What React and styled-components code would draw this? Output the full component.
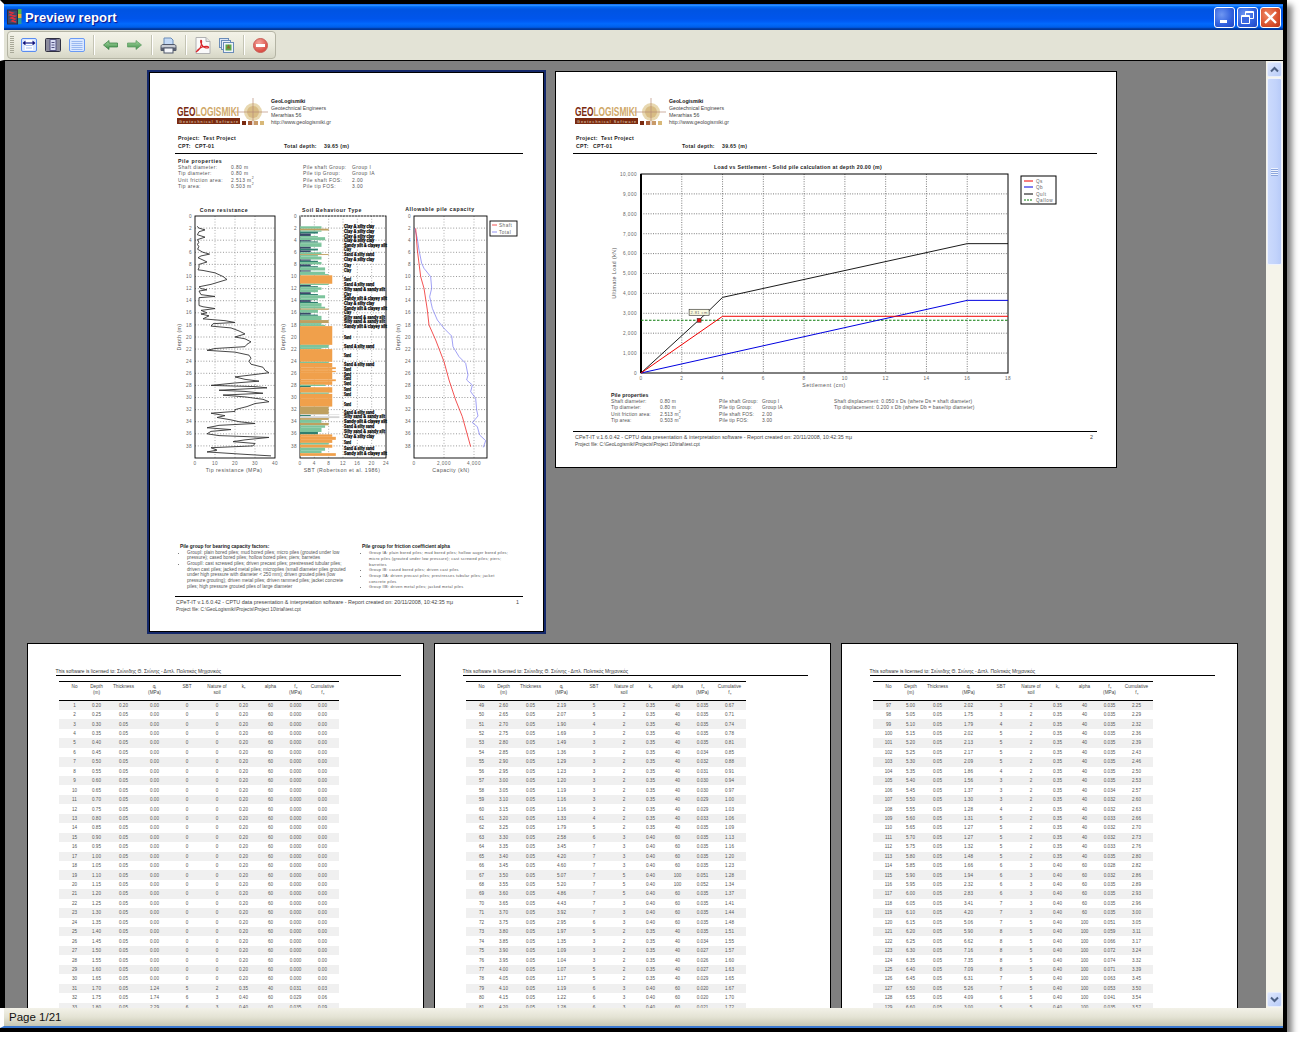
import React from "react";
import styled, { createGlobalStyle } from "styled-components";

const GlobalStyle = createGlobalStyle`
  html, body { margin: 0; padding: 0; background: #fff; }
  body { font-family: "Liberation Sans", Arial, sans-serif; }
`;

const Frame = styled.div`
  width: 1283px;
  height: 1028px;
  padding: 0 4px 4px 0;
  background: #000;
  box-shadow: 5px 5px 6px rgba(0, 0, 0, 0.5);
  display: flex;
  flex-direction: column;
`;

const TitleBar = styled.div`
  height: 26px;
  border-top: 4px solid #000;
  border-left: 4px solid #fff;
  display: flex;
  align-items: center;
  padding: 0 2px 0 3px;
  background: linear-gradient(180deg, #0058ee 0%, #3593ff 4%, #288eff 6%, #127dff 8%, #036ffc 10%, #0262ee 14%, #0057e5 20%, #0054e3 24%, #0055eb 56%, #005bf5 66%, #026afe 76%, #0062ef 86%, #0052d6 92%, #0040ab 94%, #003092 100%);
  background-origin: padding-box;
`;

const TitleText = styled.div`
  margin-left: 3px;
  flex: 1;
  color: #fff;
  font-size: 13px;
  font-weight: 700;
  letter-spacing: 0.1px;
  text-shadow: 1px 1px 1px #0f1089;
`;

const WindowButton = styled.div`
  width: 19px;
  height: 19px;
  margin-left: 2px;
  border: 1px solid #fff;
  border-radius: 3px;
  display: flex;
  align-items: center;
  justify-content: center;
  background: ${(p) =>
    p.$close
      ? "radial-gradient(circle at 35% 35%, #ef8a66, #d9502c 60%, #b9351a)"
      : "radial-gradient(circle at 35% 35%, #6f97f2, #2f5fdd 60%, #2346c0)"};
`;

const Toolbar = styled.div`
  height: 30px;
  border-left: 4px solid #fff;
  border-bottom: 1px solid #000;
  background: #e3e3d6;
  display: flex;
  align-items: center;
  padding-left: 3px;
`;

const ToolGroup = styled.div`
  height: 28px;
  width: 269px;
  box-sizing: border-box;
  border: 1px solid #b4b4a4;
  border-radius: 4px;
  background: linear-gradient(180deg, #f3f2e8 0%, #e8e8da 55%, #d6d6c6 100%);
  display: flex;
  align-items: center;
  padding-left: 2px;
`;

const Gripper = styled.div`
  width: 4px;
  height: 18px;
  margin-right: 2.5px;
  background: repeating-linear-gradient(180deg, #a8a898 0 1px, transparent 1px 2px);
`;

const ToolButton = styled.div`
  width: 24px;
  height: 24px;
  display: flex;
  align-items: center;
  justify-content: center;
`;

const ToolSeparator = styled.div`
  width: 1px;
  height: 20px;
  margin: 0 4px 0 4px;
  background: #c4c4b4;
  border-right: 1px solid #fff;
`;

const Middle = styled.div`
  flex: 1;
  min-height: 0;
  margin-left: 5px;
  display: flex;
`;

const Canvas = styled.div`
  flex: 1;
  min-width: 0;
  overflow: hidden;
  background: #808080;
  padding: 9px 7px 0 0;
  box-sizing: border-box;
  display: flex;
  flex-direction: column;
  gap: 9px;
`;

const PageRow = styled.div`
  display: flex;
  justify-content: center;
  align-items: flex-start;
  gap: ${(p) => p.$gap}px;
  flex-shrink: 0;
`;

const Sheet = styled.div`
  flex-shrink: 0;
  box-sizing: border-box;
  background: #fff;
  color: #333;
  border: 1px solid #000;
  display: flex;
  flex-direction: column;
  overflow: hidden;
`;

const CoverSheet = styled(Sheet)`
  width: 399px;
  height: 564px;
  padding: 22px 21px 0 26px;
  border: 2px solid #14286a;
  box-shadow: inset 0 0 0 1px #000;
`;

const ChartSheet = styled(Sheet)`
  width: 562px;
  height: 397px;
  margin-top: 1px;
  padding: 22px 19px 0 17px;
`;

const TableSheet = styled(Sheet)`
  width: 397px;
  height: 564px;
  padding: 24px 22px 0 28px;
`;

const Letterhead = styled.div`
  display: flex;
  padding-left: 2px;
`;

const Contact = styled.div`
  margin: 3.5px 0 0 2px;
  font-size: 5.2px;
  line-height: 7.3px;
  color: #444;
`;

const ContactName = styled.div`
  font-weight: 700;
  color: #111;
`;

const ProjectBlock = styled.div`
  margin-top: 7.3px;
  padding-left: 3px;
  font-size: 5.2px;
  line-height: 8px;
  font-weight: 700;
  color: #222;
  letter-spacing: 0.3px;
`;

const ProjectLine = styled.div`
  display: flex;
`;

const ProjectField = styled.span`
  width: ${(p) => p.$w}px;
  flex-shrink: 0;
`;

const Rule = styled.div`
  height: 1px;
  margin-top: ${(p) => p.$top || 0}px;
  background: #000;
  flex-shrink: 0;
`;

const PropsTitle = styled.div`
  margin-top: ${(p) => p.$top}px;
  padding-left: ${(p) => p.$left}px;
  font-size: 5.2px;
  line-height: 8px;
  font-weight: 700;
  letter-spacing: ${(p) => p.$spacing}px;
  color: #222;
`;

const PropsGrid = styled.div`
  display: grid;
  grid-template-columns: ${(p) => p.$cols};
  padding-left: ${(p) => p.$left}px;
  font-size: 4.9px;
  line-height: 6.4px;
  letter-spacing: ${(p) => p.$spacing}px;
  color: #555;
  white-space: nowrap;
`;

const ChartRow = styled.div`
  display: flex;
  margin-top: ${(p) => p.$top}px;
  flex-shrink: 0;
`;

const ChartSvg = styled.svg`
  display: block;
  flex-shrink: 0;
`;

const AxisText = styled.text`
  font-size: ${(p) => p.$size || 4.7}px;
  fill: #666;
  letter-spacing: 0.45px;
`;

const AxisTitle = styled.text`
  font-size: 5.2px;
  fill: #555;
  letter-spacing: 0.45px;
`;

const ChartTitle = styled.text`
  font-size: 5.2px;
  font-weight: 700;
  fill: #222;
  letter-spacing: ${(p) => p.$spacing}px;
`;

const SbtText = styled.text`
  font-size: 4.6px;
  font-weight: 700;
  fill: #000;
  stroke: #000;
  stroke-width: 0.25px;
`;

const NotesRow = styled.div`
  margin-top: 67px;
  padding-left: 5px;
  display: grid;
  grid-template-columns: 182px 154px;
  height: 53px;
`;

const NoteTitle = styled.div`
  font-size: 4.8px;
  line-height: 8px;
  font-weight: 700;
  color: #222;
`;

const NoteList = styled.ul`
  margin: ${(p) => (p.$small ? "-0.5px" : "-1px")} 0 0;
  padding: 0 0 0 7px;
  width: ${(p) => (p.$small ? "140px" : "165px")};
  font-size: ${(p) => (p.$small ? "3.9px" : "4.7px")};
  line-height: 5.7px;
  letter-spacing: ${(p) => (p.$small ? "0.25px" : "0")};
  color: #555;
`;

const Footer = styled.div`
  padding: 1px 4px 0 ${(p) => p.$left}px;
  line-height: 8px;
  color: #444;
`;

const FooterLine = styled.div`
  display: flex;
  justify-content: space-between;
  white-space: nowrap;
  font-size: ${(p) => p.$size}px;
`;

const LicenseText = styled.div`
  font-size: 4.9px;
  line-height: 7px;
  color: #333;
  white-space: nowrap;
`;

const Table = styled.div`
  margin: 5px 0 0 3px;
  width: 280px;
  border-top: 1px solid #000;
`;

const columns = "22px 22px 32px 30px 35px 25px 28px 26px 24px 30px";

const HeaderRow = styled.div`
  display: grid;
  grid-template-columns: ${columns};
  padding: 1.5px 0 2px 5px;
  border-bottom: 1px solid #000;
  font-size: 4.7px;
  line-height: 6.7px;
  text-align: center;
  color: #444;
  height: 14px;
`;

const DataRow = styled.div`
  display: grid;
  grid-template-columns: ${columns};
  padding-left: 5px;
  height: 9.45px;
  align-items: center;
  font-size: 4.6px;
  text-align: center;
  color: #555;
  background: ${(p) => (p.$shaded ? "#f0f0f0" : "#fff")};
`;

const ScrollBar = styled.div`
  width: 17px;
  flex-shrink: 0;
  background: #f5f4ea;
  display: flex;
  flex-direction: column;
  padding: 1px 0;
  box-sizing: border-box;
  overflow: hidden;
`;

const ScrollButton = styled.div`
  width: 15px;
  height: 15px;
  margin-left: 1px;
  border: 1px solid #e8eefc;
  border-radius: 2px;
  box-sizing: border-box;
  background: linear-gradient(135deg, #dfe8fd, #b8ccf8);
  display: flex;
  align-items: center;
  justify-content: center;
`;

const ScrollThumb = styled.div`
  width: 15px;
  height: 187px;
  margin: 1px 0 0 1px;
  border: 1px solid #eef2fd;
  border-radius: 2px;
  box-sizing: border-box;
  background: linear-gradient(90deg, #cbdafc, #c2d3fb 60%, #b8cbf8);
  display: flex;
  align-items: center;
  justify-content: center;
`;

const ThumbGrip = styled.div`
  width: 7px;
  height: 8px;
  background: repeating-linear-gradient(180deg, #eef3fe 0 1px, #8ca6dc 1px 2px);
`;

const ScrollTrack = styled.div`
  flex: 1;
`;

const StatusBar = styled.div`
  height: 18px;
  border-left: 4px solid #fff;
  border-bottom: 2px solid #3a78d0;
  background: linear-gradient(180deg, #f2f1e8 0%, #e4e3d4 50%, #c6c6b2 100%);
  padding-left: 5px;
  font-size: 11.5px;
  line-height: 19px;
  color: #111;
`;

/* ---- drawings ---- */

const AppIcon = () => (
  <svg width="15" height="16" viewBox="0 0 15 16">
    <rect x="0.5" y="1" width="10" height="14" fill="#3c4a6a" stroke="#2a2a40" />
    <path d="M2 3l4 1-3 2 5 1-4 2 4 1-3 2 4 1" fill="none" stroke="#e0303c" strokeWidth="1.4" />
    <rect x="11" y="0" width="3.5" height="5" fill="#58b848" />
    <rect x="11" y="5" width="3.5" height="4" fill="#e8b030" />
    <rect x="11" y="9" width="3.5" height="6" fill="#2a9a9a" />
  </svg>
);

const FitWidthIcon = () => (
  <svg width="16" height="14" viewBox="0 0 16 14">
    <rect x="0.5" y="0.5" width="15" height="13" rx="1.5" fill="#dbe8ff" stroke="#5a8cf0" />
    <rect x="4" y="2" width="8" height="10" fill="#fff" />
    <path d="M5 5h6M5 7.5h6M5 10h6" stroke="#a8c0f0" />
    <path d="M1.5 5l3-2.5v5zM14.5 5l-3-2.5v5z" fill="#10107a" />
    <path d="M3 5h10" stroke="#10107a" />
  </svg>
);

const OnePageIcon = () => (
  <svg width="16" height="14" viewBox="0 0 16 14">
    <rect x="0.5" y="0.5" width="15" height="13" rx="1" fill="#8c8c9c" stroke="#303040" />
    <rect x="5" y="1.5" width="6" height="11" fill="#d8dcf4" stroke="#505080" />
    <path d="M6.5 4.5h3M6.5 7h3M6.5 9.5h3" stroke="#505080" />
  </svg>
);

const PageWidthIcon = () => (
  <svg width="16" height="14" viewBox="0 0 16 14">
    <rect x="0.5" y="0.5" width="15" height="13" rx="1.5" fill="#dbe8ff" stroke="#6a9af4" />
    <path d="M2.5 3.5h11M2.5 5.5h11M2.5 7.5h11M2.5 9.5h11M2.5 11.5h11" stroke="#9ab8f0" />
  </svg>
);

const ArrowIcon = ({ right }) => (
  <svg width="15" height="10" viewBox="0 0 15 10">
    <defs>
      <linearGradient id={right ? "arrowR" : "arrowL"} x1="0" y1="0" x2="0" y2="1">
        <stop offset="0" stopColor="#a6d8a0" />
        <stop offset="1" stopColor="#3f8f4a" />
      </linearGradient>
    </defs>
    <path
      d={right ? "M0.5 3h8.5V0.5L14.5 5 9 9.5V7H0.5z" : "M14.5 3H6V0.5L0.5 5 6 9.5V7h8.5z"}
      fill={`url(#${right ? "arrowR" : "arrowL"})`}
      stroke={right ? "#5a9a60" : "#2f7a3c"}
      strokeWidth="0.7"
    />
  </svg>
);

const PrinterIcon = () => (
  <svg width="17" height="17" viewBox="0 0 17 17">
    <path d="M4 1h7l2 2v6H4z" fill="#c4daf6" stroke="#6a8cb8" />
    <path d="M1 9.5c0-1.5 1-2 2-2h11c1 0 2 .5 2 2v4H1z" fill="#c8ccd4" stroke="#50586a" />
    <rect x="1" y="10.5" width="15" height="3" fill="#5a6070" />
    <rect x="4" y="11" width="9" height="5" fill="#f4f6fa" stroke="#50586a" />
  </svg>
);

const PdfIcon = () => (
  <svg width="16" height="17" viewBox="0 0 16 17">
    <path d="M1 .5h10l4 4v12H1z" fill="#fafafa" stroke="#b0b0b0" />
    <path d="M11 .5v4h4" fill="#e4e4e4" stroke="#b0b0b0" />
    <path
      d="M1 15c3-1.5 5-5 5.5-8.5C7 3 6 2.5 5.6 4c-.3 2 2 5.5 4 6.5 1.5.6 4.4.8 4-.4-.3-1-4-.9-6.6-.1C5 11 2.5 13 1 15z"
      fill="none"
      stroke="#d8252a"
      strokeWidth="1.1"
    />
  </svg>
);

const ImagesIcon = () => (
  <svg width="15" height="15" viewBox="0 0 15 15">
    <rect x="0.5" y="0.5" width="9" height="9" fill="#dce6f6" stroke="#6a8cb8" />
    <rect x="2.5" y="2.5" width="9" height="9" fill="#e8eef8" stroke="#6a8cb8" />
    <rect x="4.5" y="4.5" width="10" height="10" fill="#f0f4fa" stroke="#6a8cb8" />
    <rect x="6.5" y="6.5" width="6" height="6" fill="#5aa84a" />
    <path d="M9.5 6.5l2 4h-4z" fill="#8a6a30" />
  </svg>
);

const StopIcon = () => (
  <svg width="15" height="15" viewBox="0 0 15 15">
    <defs>
      <radialGradient id="stopFill" cx="0.4" cy="0.3" r="0.8">
        <stop offset="0" stopColor="#f4a49c" />
        <stop offset="1" stopColor="#d4382e" />
      </radialGradient>
    </defs>
    <circle cx="7.5" cy="7.5" r="7" fill="url(#stopFill)" stroke="#c8605a" />
    <rect x="3" y="6" width="9" height="3" fill="#fff" />
  </svg>
);

const Logo = () => (
  <svg width="92" height="32" viewBox="0 0 92 32">
    <circle cx="76" cy="18" r="9" fill="#e8d8b0" />
    <circle cx="76" cy="18" r="6" fill="#d8bc84" />
    <path d="M58 18h33M76 4v27" stroke="#b88c78" strokeWidth="0.7" />
    <text x="0" y="21.5" fontSize="12" fontWeight="700" textLength="62" lengthAdjust="spacingAndGlyphs">
      <tspan fill="#7a2a10">GEO</tspan>
      <tspan fill="#cfa868">LOGISMIKI</tspan>
    </text>
    <rect x="0" y="24" width="63" height="6" fill="#7a2a10" />
    <text x="2" y="28.8" fontSize="3.6" fill="#f0e4d0" textLength="59" lengthAdjust="spacing">
      Geotechnical Software
    </text>
    <rect x="65" y="27" width="4" height="4" fill="#7a2a10" />
    <rect x="71" y="27" width="4" height="4" fill="#a8603c" />
    <rect x="77" y="27" width="4" height="4" fill="#c89a68" />
    <rect x="83" y="27" width="4" height="4" fill="#d8b878" />
  </svg>
);

const ReportHeader = () => (
  <>
    <Letterhead>
      <Logo />
      <Contact>
        <ContactName>GeoLogismiki</ContactName>
        <div>Geotechnical Engineers</div>
        <div>Merarhias 56</div>
        <div>http://www.geologismiki.gr</div>
      </Contact>
    </Letterhead>
    <ProjectBlock>
      <ProjectLine>
        <ProjectField $w={25}>Project:</ProjectField>
        <span>Test Project</span>
      </ProjectLine>
      <ProjectLine>
        <ProjectField $w={17}>CPT:</ProjectField>
        <ProjectField $w={89}>CPT-01</ProjectField>
        <ProjectField $w={40}>Total depth:</ProjectField>
        <span>39.65 (m)</span>
      </ProjectLine>
    </ProjectBlock>
    <Rule $top={3} />
  </>
);

const Superscript = styled.sup`
  font-size: 3.5px;
  line-height: 0;
`;

const ReportFooter = ({ page, left }) => (
  <Footer $left={left}>
    <FooterLine $size={5.4}>
      <span>CPeT-IT v.1.6.0.42 - CPTU data presentation &amp; interpretation software - Report created on: 20/11/2008, 10:42:35 πμ</span>
      <span>{page}</span>
    </FooterLine>
    <FooterLine $size={4.7}>
      <span>Project file: C:\GeoLogismiki\Projects\Project 10\trial\test.cpt</span>
    </FooterLine>
  </Footer>
);

const depthTicks = Array.from({ length: 20 }, (_, i) => i * 2);
const FT = 12;
const FB = 254;
const mToY = (d) => FT + (d * (FB - FT)) / 40;

const DepthAxes = ({ x0, x1, xTicks, title, xTitle, titleX, titleY = 8, depthX, xTitleX, dashedTop }) => (
  <>
    {depthTicks.slice(1).map((d) => (
      <line key={d} x1={x0} x2={x1} y1={mToY(d)} y2={mToY(d)} stroke="#555" strokeWidth="0.6" strokeDasharray="1 1.8" />
    ))}
    {xTicks.slice(1, -1).map((t) => (
      <line key={t.x} x1={t.x} x2={t.x} y1={FT} y2={FB} stroke="#777" strokeWidth="0.6" strokeDasharray="1 1.8" />
    ))}
    <rect x={x0} y={FT} width={x1 - x0} height={FB - FT} fill="none" stroke="#000" strokeWidth="0.9" />
    {dashedTop && <line x1={x0} x2={x1} y1={FT} y2={FT} stroke="#fff" strokeWidth="1" strokeDasharray="1 2" />}
    {depthTicks.map((d) => (
      <AxisText key={d} x={x0 - 3} y={mToY(d) + 1.6} textAnchor="end">
        {d}
      </AxisText>
    ))}
    {xTicks.map((t) => (
      <AxisText key={t.x} x={t.x} y={FB + 6.5} textAnchor="middle">
        {t.label}
      </AxisText>
    ))}
    <ChartTitle x={titleX} y={titleY} textAnchor="middle" $spacing={0.55}>
      {title}
    </ChartTitle>
    <AxisTitle x={xTitleX} y={FB + 13.5} textAnchor="middle">
      {xTitle}
    </AxisTitle>
    <AxisTitle transform={`translate(${depthX} 133) rotate(-90)`} textAnchor="middle">
      Depth (m)
    </AxisTitle>
  </>
);

const conePoints = [[1.7,1],[2,2],[2.3,5],[2.6,2],[3.1,1.2],[3.5,5],[3.9,1.2],[4.4,2],[4.7,1],[5,2],[5.5,1.3],[6,4],[6.3,7.3],[6.6,3],[6.9,1.5],[7.2,3.5],[7.6,6],[8,2],[8.5,2],[8.9,1.5],[9,4],[9.4,10],[10,14],[10.5,16],[10.8,13],[11.3,8],[11.7,2],[12,3],[12.2,6],[12.4,2],[13,3],[13.3,10],[13.5,2],[14.2,2],[14.8,2],[15,4],[15.3,10],[15.6,3],[16,6],[16.2,3],[16.5,7],[17,4],[17.3,15],[17.6,20],[17.8,9],[18.2,8],[18.5,18],[19,22],[19.5,25],[20,20],[20.3,25],[20.8,28],[21.2,26],[21.6,25],[21.9,10],[22.2,6],[22.5,20],[23,27],[23.5,28],[24,27],[24.5,28],[25,34],[25.5,35],[25.9,37],[26.2,30],[26.6,20],[27,25],[27.3,32],[27.6,20],[28,8],[28.2,30],[28.4,36],[28.8,12],[29,25],[29.3,34],[29.6,14],[29.9,25],[30.3,34],[30.7,37],[31,30],[31.5,26],[32,20],[32.3,20],[32.6,8],[33,15],[33.3,11],[33.7,18],[34,22],[34.3,30],[34.6,12],[35,6],[35.3,18],[35.6,8],[36,6],[36.3,12],[36.6,37],[37,25],[37.3,19],[37.6,30],[38,29],[38.3,8],[38.7,11],[39,6],[39.4,25],[39.65,38]];

const ConeChart = () => {
  const x0 = 20;
  const sx = (v) => x0 + v * 2;
  return (
    <ChartSvg width="104" height="272">
      <DepthAxes
        x0={x0}
        x1={100}
        xTicks={[0, 10, 20, 30, 40].map((v) => ({ x: sx(v), label: v }))}
        title="Cone resistance"
        titleX={49}
        xTitle="Tip resistance (MPa)"
        xTitleX={59}
        depthX={6}
      />
      <polyline
        points={conePoints.map(([d, v]) => `${sx(v)},${mToY(d)}`).join(" ")}
        fill="none"
        stroke="#333"
        strokeWidth="0.9"
      />
    </ChartSvg>
  );
};

const G = "#7cc49c";
const T = "#2f7f6f";
const N = "#3a4a6a";
const O = "#f0a04b";
const B = "#bfa060";
const L = "#d4d4d4";
const sbtBars = [[2.1,6,G],[2.4,8,B],[2.6,6,G],[2.9,5,T],[3.3,3,N],[3.5,5,G],[4,7,G],[4.2,3,N],[4.4,5,T],[4.6,6,G],[5.1,6,G],[5.4,3,N],[5.7,5,T],[6,3,N],[6.3,6,G],[6.45,8,B],[6.7,5,G],[7.2,6,G],[7.4,3,N],[7.6,5,T],[8,6,G],[8.3,3,N],[8.5,5,T],[9,7,G],[9.2,3,N],[9.6,7,G],[9.8,8,G],[11.2,9,O],[11.4,8,G],[11.6,3,N],[11.8,5,T],[12.2,6,G],[12.6,5,G],[12.9,3,N],[13.1,5,T],[13.6,7,G],[13.9,5,G],[14.2,3,N],[14.4,5,T],[15,6,G],[15.3,7,G],[15.5,8,B],[16,5,G],[16.3,3,N],[16.5,5,T],[17.2,6,G],[17.7,8,B],[18,6,G],[18.2,7,G],[21.3,9,O],[21.8,8,G],[22,6,G],[24.1,9,O],[24.3,8,G],[25,9,O],[25.3,10,O],[25.6,9,O],[25.8,10,O],[27,9,O],[27.3,10,O],[27.9,9,O],[28.1,7,G],[28.3,3,T],[29.2,9,O],[29.4,8,G],[30.1,9,O],[31.5,9,O],[32.8,8,B],[32.9,11,L],[33.1,3,T],[33.4,11,L],[33.7,8,B],[34.2,6,G],[34.6,8,B],[35,7,G],[35.7,6,G],[36.1,5,T],[36.5,9,O],[37,10,O],[37.5,9,O],[37.8,8,G],[38.3,9,O],[38.8,7,G],[39.2,6,G],[39.65,10,O]];

const CS = "Clay & silty clay";
const SS = "Sand & silty sand";
const SI = "Silty sand & sandy silt";
const SC = "Sandy silt & clayey silt";
const sbtLabels = [[1.65,CS],[2.6,CS],[3.3,CS],[4.05,CS],[4.8,SC],[5.6,"Clay"],[6.3,SS],[7.1,CS],[8.1,"Clay"],[9,"Clay"],[10.4,"Sand"],[11.3,SS],[12.1,SI],[12.9,"Clay"],[13.6,SC],[14.4,CS],[15.2,SC],[16,"Clay"],[16.8,SI],[17.5,SI],[18.3,SC],[20,"Sand"],[21.6,SS],[23.1,"Sand"],[24.5,SS],[25.3,"Sand"],[26.2,"Sand"],[26.9,"Sand"],[27.7,"Sand"],[28.7,"Sand"],[29.5,"Sand"],[31.2,"Sand"],[32.5,SS],[33.2,SI],[34,SC],[34.7,SS],[35.6,SI],[36.5,CS],[37.5,"Sand"],[38.4,SS],[39.2,SC]];

const SbtChart = () => {
  const x0 = 21;
  const unit = 86 / 24;
  let from = 1.7;
  const bars = sbtBars.map(([to, len, color]) => {
    const bar = <rect key={to} x={x0} y={mToY(from)} width={len * unit} height={mToY(to) - mToY(from)} fill={color} />;
    from = to;
    return bar;
  });
  return (
    <ChartSvg width="116" height="272">
      <DepthAxes
        x0={x0}
        x1={107}
        xTicks={[0, 4, 8, 12, 16, 20, 24].map((v) => ({ x: x0 + v * unit, label: v }))}
        title="Soil Behaviour Type"
        titleX={53}
        xTitle="SBT (Robertson et al. 1986)"
        xTitleX={63}
        depthX={6}
        dashedTop
      />
      {bars}
      {sbtLabels.map(([d, label]) => (
        <SbtText key={d} x={65} y={mToY(d) + 1.6} textLength={label.length * 1.78} lengthAdjust="spacingAndGlyphs">
          {label}
        </SbtText>
      ))}
    </ChartSvg>
  );
};

const shaftLine = [[800,85],[805,150],[815,230],[825,265],[835,330],[840,375],[860,420],[885,485],[900,540],[920,600],[940,650],[965,740]];
const totalLine = [[797,85],[805,115],[810,150],[818,190],[825,205],[845,230],[848,265],[842,290],[850,325],[865,360],[885,385],[908,408],[912,440],[930,470],[950,490],[957,525],[953,540],[970,555],[965,575],[980,595],[983,630],[987,648],[970,668],[985,680],[992,705],[1010,722],[1003,742]];

const CapacityChart = () => {
  const x0 = 19;
  const local = (line) => line.map(([x, y]) => `${x0 + (x - 795) / 3},${FT + (y - 48) / 3}`).join(" ");
  return (
    <ChartSvg width="126" height="272">
      <DepthAxes
        x0={x0}
        x1={92}
        xTicks={[
          { x: x0, label: "0" },
          { x: x0 + 30, label: "2,000" },
          { x: x0 + 60, label: "4,000" },
          { x: x0 + 73, label: "" },
        ]}
        title="Allowable pile capacity"
        titleX={45}
        titleY={7}
        xTitle="Capacity (kN)"
        xTitleX={56}
        depthX={5}
      />
      <polyline points={local(totalLine)} fill="none" stroke="#7878f0" strokeWidth="0.7" />
      <polyline points={local(shaftLine)} fill="none" stroke="#f02828" strokeWidth="0.8" />
      <rect x="95" y="17" width="27" height="15" fill="#fff" stroke="#000" strokeWidth="0.9" />
      <line x1="97" x2="102" y1="21" y2="21" stroke="#f02828" strokeWidth="0.8" />
      <line x1="97" x2="102" y1="28" y2="28" stroke="#7878f0" strokeWidth="0.8" />
      <AxisText x="104" y="22.5">Shaft</AxisText>
      <AxisText x="104" y="29.5">Total</AxisText>
    </ChartSvg>
  );
};

const LoadChart = () => {
  const x0 = 68;
  const x1 = 435;
  const yT = 13;
  const yB = 212;
  const sx = (v) => x0 + (v * (x1 - x0)) / 18;
  const sy = (v) => yB - (v * (yB - yT)) / 10000;
  const path = (pts) => pts.map(([a, b]) => `${sx(a)},${sy(b)}`).join(" ");
  const loads = Array.from({ length: 11 }, (_, i) => i * 1000);
  const settle = Array.from({ length: 10 }, (_, i) => i * 2);
  return (
    <ChartSvg width="524" height="230">
      <ChartTitle x="225" y="8" textAnchor="middle" $spacing={0.3}>
        Load vs Settlement - Solid pile calculation at depth 20.00 (m)
      </ChartTitle>
      {loads.slice(1, -1).map((v) => (
        <line key={v} x1={x0} x2={x1} y1={sy(v)} y2={sy(v)} stroke="#444" strokeWidth="0.7" strokeDasharray="1 1.4" />
      ))}
      {settle.slice(1, -1).map((v) => (
        <line key={v} x1={sx(v)} x2={sx(v)} y1={yT} y2={yB} stroke="#444" strokeWidth="0.7" strokeDasharray="1 1.4" />
      ))}
      <rect x={x0} y={yT} width={x1 - x0} height={yB - yT} fill="none" stroke="#000" strokeWidth="1" />
      <line x1={x0} x2={x0} y1={yT} y2={yB} stroke="#000" strokeWidth="2" />
      {loads.map((v) => (
        <AxisText key={v} x={x0 - 4} y={sy(v) + 1.8} textAnchor="end">
          {v.toLocaleString("en-US")}
        </AxisText>
      ))}
      {settle.map((v) => (
        <AxisText key={v} x={sx(v)} y={yB + 7} textAnchor="middle">
          {v}
        </AxisText>
      ))}
      <AxisTitle x="251" y={yB + 13.5} textAnchor="middle">Settlement (cm)</AxisTitle>
      <AxisTitle transform="translate(43 112) rotate(-90)" textAnchor="middle">Ultimate Load (kN)</AxisTitle>
      <line x1={x0} x2={x1} y1={sy(2650)} y2={sy(2650)} stroke="#0a7a0a" strokeWidth="1" strokeDasharray="2.5 1.5" />
      <polyline points={path([[0, 0], [3.2, 3000], [4, 3800], [16, 6500], [18, 6500]])} fill="none" stroke="#000" strokeWidth="0.9" />
      <polyline points={path([[0, 0], [16, 3650], [18, 3650]])} fill="none" stroke="#0000e0" strokeWidth="1" />
      <polyline points={path([[0, 0], [4, 2850], [18, 2850]])} fill="none" stroke="#f00000" strokeWidth="1" />
      <rect x={sx(2.85) - 2} y={sy(2650) - 2} width="4" height="4" fill="#e81010" stroke="#333" strokeWidth="0.5" />
      <rect x={sx(2.85) - 10} y={sy(2650) - 11} width="20" height="6" fill="#fbfbe0" stroke="#222" strokeWidth="0.6" />
      <AxisText x={sx(2.85)} y={sy(2650) - 6.5} textAnchor="middle" $size={4}>2.81 cm</AxisText>
      <rect x="448" y="15" width="35" height="28" fill="#fff" stroke="#000" strokeWidth="1" />
      {[
        ["Qs", "#f00000", 20, undefined],
        ["Qb", "#0000e0", 26, undefined],
        ["Qult", "#000", 33, undefined],
        ["Qallow", "#0a7a0a", 39, "2 1"],
      ].map(([label, color, y, dash]) => (
        <React.Fragment key={label}>
          <line x1="451" x2="460" y1={y} y2={y} stroke={color} strokeWidth="1" strokeDasharray={dash} />
          <AxisText x="463" y={y + 1.6}>{label}</AxisText>
        </React.Fragment>
      ))}
    </ChartSvg>
  );
};

/* ---- table data: q sbt nature ks alpha fs cumulative ---- */

const zeroRows = Array.from({ length: 30 }, () => "0.00 0 0 0.20 60 0.000 0.00");
const tableOne = [...zeroRows, "1.24 5 2 0.35 40 0.031 0.03", "1.74 6 3 0.40 60 0.029 0.06", "2.29 6 3 0.40 60 0.035 0.09"];
const tableTwo = `2.19 5 2 0.35 40 0.035 0.67
2.07 5 2 0.35 40 0.035 0.71
1.90 4 2 0.35 40 0.035 0.74
1.69 3 2 0.35 40 0.035 0.78
1.49 3 2 0.35 40 0.035 0.81
1.36 3 2 0.35 40 0.034 0.85
1.29 3 2 0.35 40 0.032 0.88
1.23 3 2 0.35 40 0.031 0.91
1.20 3 2 0.35 40 0.030 0.94
1.19 3 2 0.35 40 0.030 0.97
1.16 3 2 0.35 40 0.029 1.00
1.16 3 2 0.35 40 0.029 1.03
1.33 4 2 0.35 40 0.033 1.06
1.79 5 2 0.35 40 0.035 1.09
2.58 6 3 0.40 60 0.035 1.13
3.45 7 3 0.40 60 0.035 1.16
4.20 7 3 0.40 60 0.035 1.20
4.60 7 3 0.40 60 0.035 1.23
5.07 7 5 0.40 100 0.051 1.28
5.20 7 5 0.40 100 0.052 1.34
4.86 7 5 0.40 60 0.035 1.37
4.43 7 3 0.40 60 0.035 1.41
3.92 7 3 0.40 60 0.035 1.44
2.95 6 3 0.40 60 0.035 1.48
1.97 5 2 0.35 40 0.035 1.51
1.35 3 2 0.35 40 0.034 1.55
1.09 3 2 0.35 40 0.027 1.57
1.04 3 2 0.35 40 0.026 1.60
1.07 5 2 0.35 40 0.027 1.63
1.17 5 2 0.35 40 0.029 1.65
1.19 6 3 0.40 60 0.020 1.67
1.22 6 3 0.40 60 0.020 1.70
1.28 6 3 0.40 60 0.021 1.72`.split("\n");
const tableThree = `2.02 3 2 0.35 40 0.035 2.25
1.75 3 2 0.35 40 0.035 2.29
1.79 4 2 0.35 40 0.035 2.32
2.02 5 2 0.35 40 0.035 2.36
2.13 5 2 0.35 40 0.035 2.39
2.17 5 2 0.35 40 0.035 2.43
2.09 5 2 0.35 40 0.035 2.46
1.86 4 2 0.35 40 0.035 2.50
1.56 3 2 0.35 40 0.035 2.53
1.37 3 2 0.35 40 0.034 2.57
1.30 3 2 0.35 40 0.032 2.60
1.28 4 2 0.35 40 0.032 2.63
1.31 5 2 0.35 40 0.033 2.66
1.27 5 2 0.35 40 0.032 2.70
1.27 5 2 0.35 40 0.032 2.73
1.32 5 2 0.35 40 0.033 2.76
1.48 5 2 0.35 40 0.035 2.80
1.66 6 3 0.40 60 0.028 2.82
1.94 6 3 0.40 60 0.032 2.86
2.32 6 3 0.40 60 0.035 2.89
2.83 6 3 0.40 60 0.035 2.93
3.41 7 3 0.40 60 0.035 2.96
4.20 7 3 0.40 60 0.035 3.00
5.06 7 5 0.40 100 0.051 3.05
5.90 8 5 0.40 100 0.059 3.11
6.62 8 5 0.40 100 0.066 3.17
7.16 8 5 0.40 100 0.072 3.24
7.35 8 5 0.40 100 0.074 3.32
7.09 8 5 0.40 100 0.071 3.39
6.31 7 5 0.40 100 0.063 3.45
5.26 7 5 0.40 100 0.053 3.50
4.09 6 5 0.40 100 0.041 3.54
3.00 5 5 0.40 100 0.035 3.57`.split("\n");

const headers = [
  ["No"],
  ["Depth", "(m)"],
  ["Thickness"],
  ["qₜ", "(MPa)"],
  ["SBT"],
  ["Nature of", "soil"],
  ["kₛ"],
  ["alpha"],
  ["fₛ", "(MPa)"],
  ["Cumulative", "fₛ"],
];

const TablePage = ({ start, rows }) => (
  <TableSheet>
    <LicenseText>This software is licensed to: Σιώνιδης Θ. Σιώνης - Διπλ. Πολιτικός Μηχανικός</LicenseText>
    <Rule />
    <Table>
      <HeaderRow>
        {headers.map((lines) => (
          <div key={lines[0]}>
            {lines.map((line) => (
              <div key={line}>{line}</div>
            ))}
          </div>
        ))}
      </HeaderRow>
      {rows.map((row, i) => {
        const no = start + i;
        const [q, ...rest] = row.split(" ");
        return (
          <DataRow key={no} $shaded={i % 2 === 0}>
            <span>{no}</span>
            <span>{(0.15 + no * 0.05).toFixed(2)}</span>
            <span>{no === 1 ? "0.20" : "0.05"}</span>
            <span>{q}</span>
            {rest.map((cell, c) => (
              <span key={c}>{cell}</span>
            ))}
          </DataRow>
        );
      })}
    </Table>
  </TableSheet>
);

const Chevron = ({ down }) => (
  <svg width="9" height="7" viewBox="0 0 9 7">
    <path d={down ? "M1 1.5l3.5 3.5L8 1.5" : "M1 5.5L4.5 2 8 5.5"} fill="none" stroke="#4d6185" strokeWidth="2" />
  </svg>
);

export default function App() {
  return (
    <>
      <GlobalStyle />
      <Frame>
        <TitleBar>
          <AppIcon />
          <TitleText>Preview report</TitleText>
          <WindowButton>
            <svg width="15" height="15" viewBox="0 0 15 15">
              <rect x="3" y="10" width="7" height="3" fill="#fff" />
            </svg>
          </WindowButton>
          <WindowButton>
            <svg width="15" height="15" viewBox="0 0 15 15">
              <path d="M5.5 1.5h8v7h-8zM5.5 2.5h8" fill="none" stroke="#fff" />
              <path d="M1.5 5.5h8v8h-8zM1.5 6.5h8" fill="#3c68e0" stroke="#fff" />
            </svg>
          </WindowButton>
          <WindowButton $close>
            <svg width="15" height="15" viewBox="0 0 15 15">
              <path d="M2 2l11 11M13 2L2 13" stroke="#fff" strokeWidth="2.4" />
            </svg>
          </WindowButton>
        </TitleBar>
        <Toolbar>
          <ToolGroup>
            <Gripper />
            <ToolButton><FitWidthIcon /></ToolButton>
            <ToolButton><OnePageIcon /></ToolButton>
            <ToolButton><PageWidthIcon /></ToolButton>
            <ToolSeparator />
            <ToolButton><ArrowIcon /></ToolButton>
            <ToolButton><ArrowIcon right /></ToolButton>
            <ToolSeparator />
            <ToolButton><PrinterIcon /></ToolButton>
            <ToolSeparator />
            <ToolButton><PdfIcon /></ToolButton>
            <ToolButton><ImagesIcon /></ToolButton>
            <ToolSeparator />
            <ToolButton><StopIcon /></ToolButton>
          </ToolGroup>
        </Toolbar>
        <Middle>
          <Canvas>
            <PageRow $gap={9}>
              <CoverSheet>
                <ReportHeader />
                <PropsTitle $top={3} $left={3} $spacing={0.55}>Pile properties</PropsTitle>
                <PropsGrid $cols="53px 72px 49px 1fr" $left={3} $spacing={0.42}>
                  <span>Shaft diameter:</span><span>0.80 m</span><span>Pile shaft Group:</span><span>Group I</span>
                  <span>Tip diameter:</span><span>0.80 m</span><span>Pile tip Group:</span><span>Group IA</span>
                  <span>Unit friction area:</span><span>2.513 m<Superscript>2</Superscript></span><span>Pile shaft FOS:</span><span>2.00</span>
                  <span>Tip area:</span><span>0.503 m<Superscript>2</Superscript></span><span>Pile tip FOS:</span><span>3.00</span>
                </PropsGrid>
                <ChartRow $top={13}>
                  <ConeChart />
                  <SbtChart />
                  <CapacityChart />
                </ChartRow>
                <NotesRow>
                  <div>
                    <NoteTitle>Pile group for bearing capacity factors:</NoteTitle>
                    <NoteList>
                      <li>GroupI: plain bored piles; mud bored piles; micro piles (grouted under low pressure); cased bored piles; hollow bored piles; piers; barrettes</li>
                      <li>GroupII: cast screwed piles; driven precast piles; prestressed tubular piles; driven cast piles; jacked metal piles; micropiles (small diameter piles grouted under high pressure with diameter &lt; 250 mm); driven grouted piles (low pressure grouting); driven metal piles; driven rammed piles; jacket concrete piles; high pressure grouted piles of large diameter</li>
                    </NoteList>
                  </div>
                  <div>
                    <NoteTitle>Pile group for friction coefficient alpha</NoteTitle>
                    <NoteList $small>
                      <li>Group IA: plain bored piles; mud bored piles; hollow auger bored piles; micro piles (grouted under low pressure); cast screwed piles; piers; barrettes</li>
                      <li>Group IB: cased bored piles; driven cast piles</li>
                      <li>Group IIA: driven precast piles; prestresses tubular piles; jacket concrete piles</li>
                      <li>Group IIB: driven metal piles; jacked metal piles</li>
                    </NoteList>
                  </div>
                </NotesRow>
                <Rule />
                <ReportFooter page="1" left={1} />
              </CoverSheet>
              <ChartSheet>
                <ReportHeader />
                <ChartRow $top={7}>
                  <LoadChart />
                </ChartRow>
                <PropsTitle $top={0} $left={38} $spacing={0.1}>Pile properties</PropsTitle>
                <PropsGrid $cols="49px 59px 43px 72px 1fr" $left={38} $spacing={0.15}>
                  <span>Shaft diameter:</span><span>0.80 m</span><span>Pile shaft Group:</span><span>Group I</span><span>Shaft displacement: 0.050 x Ds (where Ds = shaft diameter)</span>
                  <span>Tip diameter:</span><span>0.80 m</span><span>Pile tip Group:</span><span>Group IA</span><span>Tip displacement: 0.200 x Db (where Db = base/tip diameter)</span>
                  <span>Unit friction area:</span><span>2.513 m<Superscript>2</Superscript></span><span>Pile shaft FOS:</span><span>2.00</span><span />
                  <span>Tip area:</span><span>0.503 m<Superscript>2</Superscript></span><span>Pile tip FOS:</span><span>3.00</span><span />
                </PropsGrid>
                <Rule $top={6.4} />
                <ReportFooter page="2" left={2} />
              </ChartSheet>
            </PageRow>
            <PageRow $gap={10}>
              <TablePage start={1} rows={tableOne} />
              <TablePage start={49} rows={tableTwo} />
              <TablePage start={97} rows={tableThree} />
            </PageRow>
          </Canvas>
          <ScrollBar>
            <ScrollButton><Chevron /></ScrollButton>
            <ScrollThumb><ThumbGrip /></ScrollThumb>
            <ScrollTrack />
            <ScrollButton><Chevron down /></ScrollButton>
          </ScrollBar>
        </Middle>
        <StatusBar>Page 1/21</StatusBar>
      </Frame>
    </>
  );
}
